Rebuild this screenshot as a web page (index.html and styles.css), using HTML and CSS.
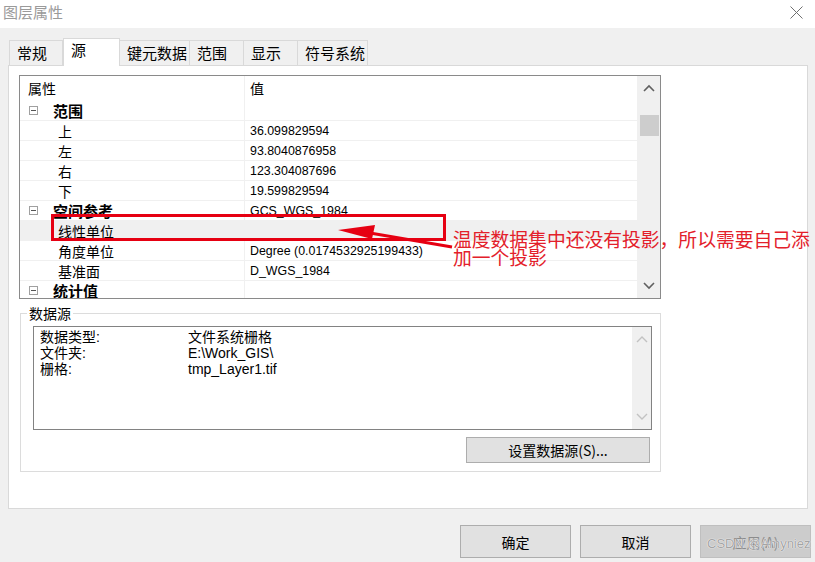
FILE: index.html
```html
<!DOCTYPE html>
<html lang="zh">
<head>
  <meta charset="UTF-8">
  <title>图层属性</title>
  <link rel="stylesheet" href="styles.css">
</head>
<body>
  <div class="titlebar">
    <span class="title">图层属性</span>
    <svg class="close" width="13" height="13" viewBox="0 0 13 13"><path d="M0.5 0.5L12.5 12.5M12.5 0.5L0.5 12.5" stroke="#6f6f6f" stroke-width="1" fill="none"/></svg>
  </div>

  <div class="tabs">
    <div class="tab w54">常规</div>
    <div class="tab active w57">源</div>
    <div class="tab w70">键元数据</div>
    <div class="tab w54">范围</div>
    <div class="tab w54">显示</div>
    <div class="tab w70">符号系统</div>
  </div>

  <div class="panel">
    <div class="grid">
      <div class="grid-rows">
        <div class="row head"><span class="name">属性</span><span class="val">值</span></div>
        <div class="row cat first"><span class="name"><i class="toggle"></i>范围</span><span class="val"></span></div>
        <div class="row"><span class="name child">上</span><span class="val">36.099829594</span></div>
        <div class="row"><span class="name child">左</span><span class="val">93.8040876958</span></div>
        <div class="row"><span class="name child">右</span><span class="val">123.304087696</span></div>
        <div class="row"><span class="name child">下</span><span class="val">19.599829594</span></div>
        <div class="row cat"><span class="name"><i class="toggle"></i>空间参考</span><span class="val">GCS_WGS_1984</span></div>
        <div class="row selected"><span class="name child">线性单位</span><span class="val"></span></div>
        <div class="row"><span class="name child">角度单位</span><span class="val">Degree (0.0174532925199433)</span></div>
        <div class="row"><span class="name child">基准面</span><span class="val">D_WGS_1984</span></div>
        <div class="row cat"><span class="name"><i class="toggle"></i>统计值</span><span class="val"></span></div>
      </div>
      <div class="vscroll">
        <svg class="arrow up" width="12" height="8" viewBox="0 0 12 8"><path d="M1 7L6 2L11 7" stroke="#606060" stroke-width="1.6" fill="none"/></svg>
        <div class="thumb"></div>
        <svg class="arrow down" width="12" height="8" viewBox="0 0 12 8"><path d="M1 1L6 6L11 1" stroke="#606060" stroke-width="1.6" fill="none"/></svg>
      </div>
    </div>

    <fieldset class="group">
      <legend>数据源</legend>
      <div class="listbox">
        <div class="list-lines">
          <div class="line"><span class="key">数据类型:</span><span>文件系统栅格</span></div>
          <div class="line"><span class="key">文件夹:</span><span>E:\Work_GIS\</span></div>
          <div class="line"><span class="key">栅格:</span><span>tmp_Layer1.tif</span></div>
        </div>
        <div class="vscroll light">
          <svg class="arrow up" width="12" height="8" viewBox="0 0 12 8"><path d="M1 7L6 2L11 7" stroke="#c2c2c2" stroke-width="1.4" fill="none"/></svg>
          <svg class="arrow down" width="12" height="8" viewBox="0 0 12 8"><path d="M1 1L6 6L11 1" stroke="#c2c2c2" stroke-width="1.4" fill="none"/></svg>
        </div>
      </div>
      <div class="group-actions">
        <button class="btn wide">设置数据源(S)...</button>
      </div>
    </fieldset>
  </div>

  <div class="footer">
    <button class="btn">确定</button>
    <button class="btn">取消</button>
    <button class="btn disabled">应用(A)<span class="watermark">CSDN @Amyniez</span></button>
  </div>

  <!-- annotation drawn over the screenshot -->
  <div class="mark-box"></div>
  <svg class="mark-arrow" width="130" height="40" viewBox="0 0 130 40">
    <path d="M40 18L122 32" stroke="#e60012" stroke-width="3" fill="none"/>
    <polygon points="8,15 45,10 42,24" fill="#e60012"/>
  </svg>
  <div class="note">温度数据集中还没有投影，所以需要自己添<br>加一个投影</div>
</body>
</html>
```

FILE: styles.css
```css
* {
  box-sizing: border-box;
}
body {
  margin: 0;
  width: 815px;
  height: 562px;
  overflow: hidden;
  position: relative;
  background: #f0f0f0;
  color: #000;
  font-family: "Liberation Sans", "Noto Sans CJK SC", sans-serif;
}
.titlebar {
  height: 28px;
  background: #fff;
  display: flex;
  justify-content: space-between;
  align-items: flex-start;
  padding: 2px 12px 0 3px;
}
.title {
  font-family: "Noto Sans CJK SC", sans-serif;
  font-size: 15px;
  line-height: 20px;
  color: #9a9a9a;
}
.close {
  display: block;
  margin-top: 4px;
}

/* tabs */
.tabs {
  display: flex;
  align-items: flex-end;
  height: 27px;
  margin: 10px 0 0 9px;
  position: relative;
  z-index: 1;
}
.tab {
  height: 25px;
  border: 1px solid #d9d9d9;
  border-bottom: none;
  border-left-width: 0;
  padding-left: 7px;
  font-family: "Noto Sans CJK SC", sans-serif;
  font-size: 15px;
  line-height: 23px;
  background: #f0f0f0;
}
.tab:first-child {
  border-left-width: 1px;
}
.tab.active {
  height: 28px;
  margin-bottom: -1px;
  background: #fff;
  border-left-width: 1px;
  line-height: 22px;
}
.w54 { width: 54px; }
.w57 { width: 57px; }
.w70 { width: 70px; }

.panel {
  margin-left: 8px;
  width: 800px;
  height: 444px;
  background: #fff;
  border: 1px solid #d9d9d9;
  padding: 9px 0 0 10px;
}

/* property grid */
.grid {
  display: flex;
  width: 642px;
  height: 224px;
  border: 1px solid #8a8a8a;
}
.grid-rows {
  width: 618px;
  border-right: 1px solid #f0f0f0;
  overflow: hidden;
}
.row {
  display: flex;
  height: 20px;
  border-top: 1px solid #f0f0f0;
}
.row.head {
  height: 24px;
  border-top: none;
}
.row.first {
  border-top: none;
}
.row.selected {
  background: #f0f0f0;
}
.name {
  width: 224px;
  flex: none;
  display: flex;
  align-items: center;
  padding-left: 8px;
  font-family: "Noto Sans CJK SC", sans-serif;
  font-size: 14px;
}
.name.child {
  padding-left: 38px;
}
.cat .name {
  padding-left: 9px;
  font-weight: bold;
  font-size: 15px;
}
.toggle {
  width: 9px;
  height: 9px;
  border: 1px solid #a0a0a0;
  margin-right: 15px;
  position: relative;
}
.toggle::after {
  content: "";
  position: absolute;
  left: 1px;
  right: 1px;
  top: 3px;
  height: 1px;
  background: #555;
}
.val {
  flex: 1;
  display: flex;
  align-items: center;
  border-left: 1px solid #f0f0f0;
  padding-left: 5px;
  font-size: 12.4px;
}
.head .val {
  font-family: "Noto Sans CJK SC", sans-serif;
  font-size: 14px;
}

.vscroll {
  width: 22px;
  background: #f0f0f0;
  position: relative;
}
.vscroll .arrow {
  position: absolute;
  left: 5px;
}
.vscroll .up {
  top: 8px;
}
.vscroll .down {
  bottom: 8px;
}
.thumb {
  position: absolute;
  left: 2px;
  right: 1px;
  top: 39px;
  height: 21px;
  background: #cdcdcd;
}

/* data source group */
.group {
  margin: 6px 0 0 1px;
  width: 641px;
  border: 1px solid #dcdcdc;
  padding: 5px 8px 8px 12px;
}
.group legend {
  margin-left: -6px;
  padding: 0 2px;
  font-family: "Noto Sans CJK SC", sans-serif;
  font-size: 14px;
  line-height: 16px;
  color: #000;
}
.listbox {
  display: flex;
  height: 104px;
  border: 1px solid #828282;
}
.list-lines {
  flex: 1;
  padding: 2px 0 0 6px;
}
.line {
  display: flex;
  font-size: 14px;
  line-height: 16px;
}
.key {
  width: 148px;
}
.vscroll.light {
  width: 19px;
  flex: none;
}
.vscroll.light .arrow {
  left: 4px;
}
.group-actions {
  display: flex;
  justify-content: flex-end;
  margin-top: 7px;
  padding-right: 2px;
}

/* buttons */
.btn {
  font-family: "Noto Sans CJK SC", sans-serif;
  font-size: 14px;
  color: #000;
  background: #e1e1e1;
  border: 1px solid #adadad;
  padding: 0;
}
.btn.wide {
  width: 184px;
  height: 26px;
}
.footer {
  display: flex;
  justify-content: flex-end;
  gap: 9px;
  margin-top: 16px;
  padding-right: 4px;
}
.footer .btn {
  width: 111px;
  height: 33px;
}
.btn.disabled {
  position: relative;
  background: #cccccc;
  border-color: #bfbfbf;
  color: #8c8c8c;
}
.watermark {
  position: absolute;
  left: 6px;
  top: 10px;
  font-family: "Liberation Sans", sans-serif;
  font-size: 13px;
  color: #a4a4a4;
  text-shadow: 0 0 1px #fff, 0 0 1px #fff;
  white-space: nowrap;
}

/* red annotation */
.mark-box {
  position: absolute;
  left: 51px;
  top: 214px;
  width: 395px;
  height: 27px;
  border: 3px solid #e60012;
}
.mark-arrow {
  position: absolute;
  left: 330px;
  top: 215px;
}
.note {
  position: absolute;
  left: 453px;
  top: 230px;
  font-family: "Noto Sans CJK SC", sans-serif;
  font-size: 18.8px;
  line-height: 18px;
  color: #e3202a;
  white-space: nowrap;
}
```
